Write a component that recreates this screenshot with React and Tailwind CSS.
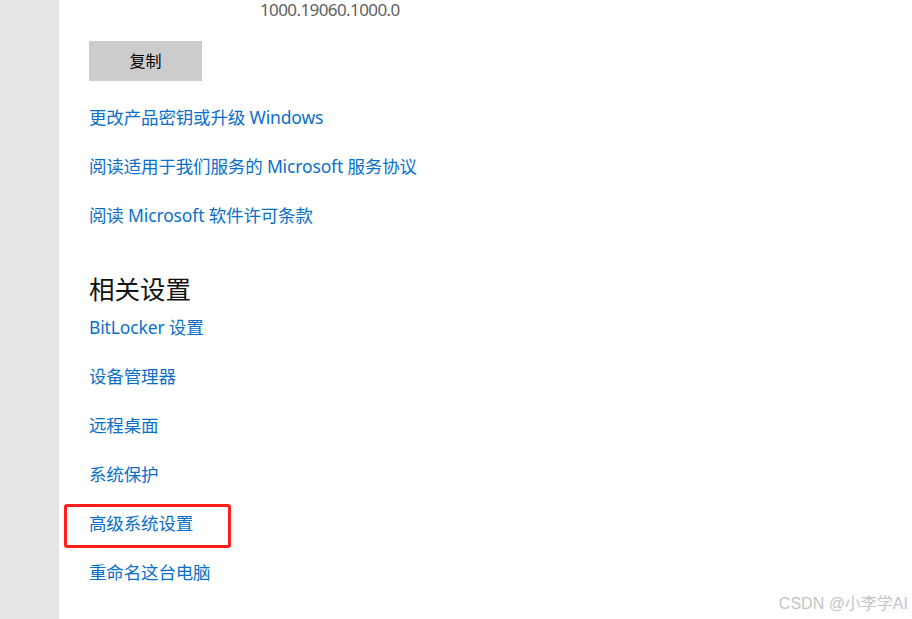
const links = [
    '更改产品密钥或升级 Windows',
    '阅读适用于我们服务的 Microsoft 服务协议',
    '阅读 Microsoft 软件许可条款',
];

const related = [
    'BitLocker 设置',
    '设备管理器',
    '远程桌面',
    '系统保护',
    '高级系统设置',
    '重命名这台电脑',
];

const LinkRow = ({ text, marked }) => (
    <div className="relative h-[49px] flex items-center">
        {marked && (
            <span className="absolute left-[-25px] top-[5.5px] w-[167px] h-[44px] border-[3px] border-[#ff1f1a] rounded-[3px]"></span>
        )}
        <a className="text-[17.5px] leading-[24px] tracking-[-0.15px] text-[#0a6fc9] cursor-pointer whitespace-nowrap">{text}</a>
    </div>
);

export default function App() {
    return (
        <div className="relative w-[912px] h-[619px] overflow-hidden bg-white flex font-['Noto_Sans','Noto_Sans_CJK_SC',sans-serif]">
            <div className="w-[59px] h-full bg-[#e6e6e6] shrink-0"></div>

            <div className="flex-1 pl-[30px] flex flex-col">
                <div className="pl-[171px] h-[20px] text-[17px] leading-[20px] text-[#5f5f5f] tracking-[-0.6px]">
                    1000.19060.1000.0
                </div>

                <button className="mt-[21px] w-[113px] h-[40px] bg-[#cccccc] text-[16px] text-black">
                    复制
                </button>

                <div className="mt-[11.5px] flex flex-col">
                    {links.map(t => <LinkRow key={t} text={t} />)}
                </div>

                <h2 className="h-[63px] pt-[32px] text-[25.5px] leading-[35px] text-[#111]">相关设置</h2>

                <div className="flex flex-col">
                    {related.map(t => <LinkRow key={t} text={t} marked={t === '高级系统设置'} />)}
                </div>
            </div>

            <div className="absolute right-[4px] bottom-[4px] text-[16px] leading-[22px] text-[#c4c4c4] font-['Liberation_Sans','Noto_Sans_CJK_SC',sans-serif]">
                CSDN @小李学AI
            </div>
        </div>
    );
}
